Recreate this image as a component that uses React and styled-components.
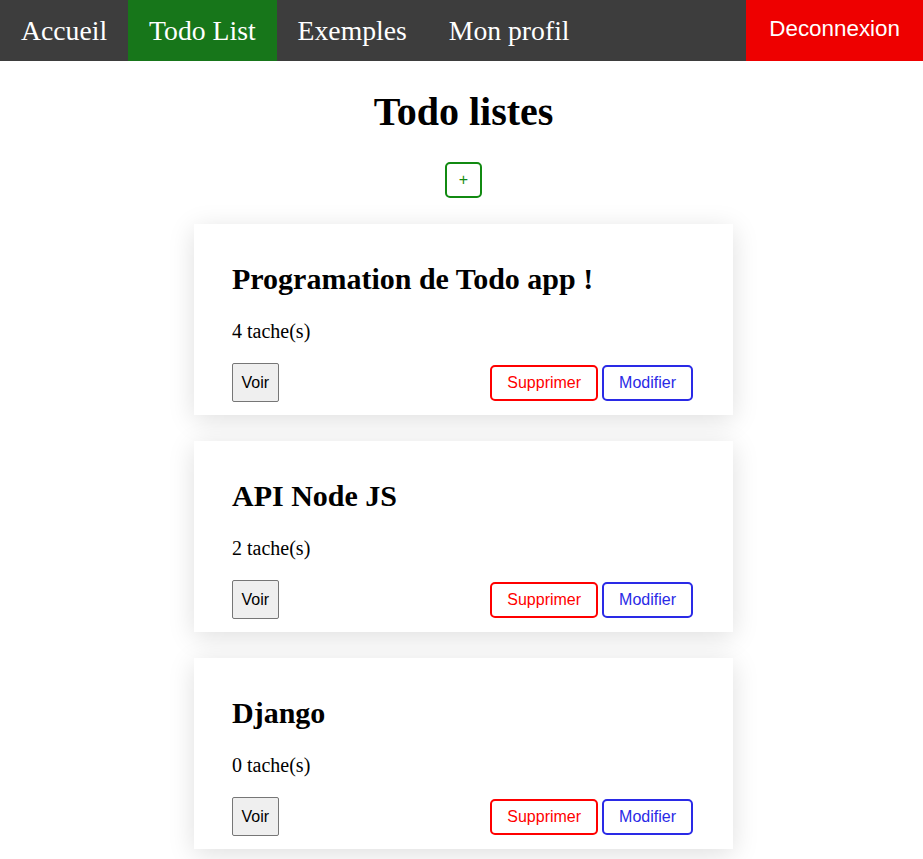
import React from "react";
import styled, { createGlobalStyle } from "styled-components";

const GlobalStyle = createGlobalStyle`
  body {
    margin: 0;
    background: #fff;
    font-family: "Liberation Serif", "Times New Roman", serif;
  }
`;

const NavBar = styled.nav`
  display: flex;
  height: 61px;
  background: #3d3d3d;
`;

const NavLink = styled.a`
  display: flex;
  align-items: center;
  padding: 0 21px;
  font-size: 27.7px;
  color: #fff;
  text-decoration: none;
  background: ${(p) => (p.$active ? "#17761a" : "transparent")};
`;

const Logout = styled.a`
  margin-left: auto;
  display: flex;
  align-items: center;
  padding: 0 23px 3px;
  font-family: "Liberation Sans", Arial, sans-serif;
  font-size: 22.4px;
  color: #fff;
  background: #ee0000;
  text-decoration: none;
`;

const Main = styled.main`
  display: flex;
  flex-direction: column;
  align-items: center;
  padding: 0 0 30px 4px;
`;

const Title = styled.h1`
  margin: 28px 0 27px;
  font-size: 40px;
  line-height: 46px;
`;

const OutlineButton = styled.button`
  font-family: "Liberation Sans", Arial, sans-serif;
  font-size: 16px;
  line-height: 18px;
  padding: 7px ${(p) => p.$px || 15}px;
  background: #fff;
  color: ${(p) => p.$color};
  border: 2px solid ${(p) => p.$color};
  border-radius: 5px;
  cursor: pointer;
`;

const List = styled.div`
  display: flex;
  flex-direction: column;
  gap: 26px;
  margin-top: 26px;
`;

const Card = styled.section`
  width: 539px;
  box-sizing: border-box;
  padding: 38px 40px 13px 38px;
  background: #fff;
  box-shadow: 0 5px 25px rgba(0, 0, 0, 0.13);
`;

const CardTitle = styled.h2`
  margin: 0;
  font-size: 30px;
  line-height: 34px;
`;

const Count = styled.p`
  margin: 24px 0 20px;
  font-size: 20px;
  line-height: 23px;
`;

const Actions = styled.div`
  display: flex;
  align-items: center;
  justify-content: space-between;
`;

const RightGroup = styled.div`
  display: flex;
  gap: 4px;
`;

const ViewButton = styled.button`
  font-family: "Liberation Sans", Arial, sans-serif;
  font-size: 16px;
  line-height: 18px;
  padding: 10px 8.5px 9px;
  background: #efefef;
  color: #000;
  border: 1px solid #767676;
  border-radius: 2px;
`;

const todos = [
  { title: "Programation de Todo app !", count: 4 },
  { title: "API Node JS", count: 2 },
  { title: "Django", count: 0 },
];

export default function App() {
  return (
    <>
      <GlobalStyle />
      <NavBar>
        <NavLink href="#">Accueil</NavLink>
        <NavLink href="#" $active>Todo List</NavLink>
        <NavLink href="#">Exemples</NavLink>
        <NavLink href="#">Mon profil</NavLink>
        <Logout href="#">Deconnexion</Logout>
      </NavBar>
      <Main>
        <Title>Todo listes</Title>
        <OutlineButton $color="#118a11" $px={12}>+</OutlineButton>
        <List>
          {todos.map((t, i) => (
            <Card key={i}>
              <CardTitle>{t.title}</CardTitle>
              <Count>{t.count} tache(s)</Count>
              <Actions>
                <ViewButton>Voir</ViewButton>
                <RightGroup>
                  <OutlineButton $color="#ff0000">Supprimer</OutlineButton>
                  <OutlineButton $color="#2a2ae6">Modifier</OutlineButton>
                </RightGroup>
              </Actions>
            </Card>
          ))}
        </List>
      </Main>
    </>
  );
}
